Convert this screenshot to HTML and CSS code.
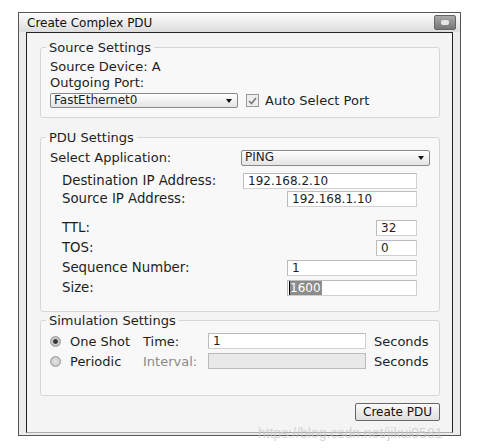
FILE: index.html
```html
<!DOCTYPE html>
<html>
<head>
    <title>Create Complex PDU</title>
    <link rel="stylesheet" href="styles.css">
</head>
<body>
    <div class="window">
        <div class="titlebar">
            <span class="title">Create Complex PDU</span>
            <span class="closebtn"><span class="face"></span></span>
        </div>

        <div class="content">
            <!-- Source -->
            <fieldset class="group src">
                <legend>Source Settings</legend>
                <div class="line">Source Device: A</div>
                <div class="line">Outgoing Port:</div>
                <div class="portrow">
                    <div class="select portsel"><span>FastEthernet0</span><span class="arrow"></span></div>
                    <span class="check">
                        <svg width="9" height="8" viewBox="0 0 9 8"><path d="M1 4 L3.5 6.5 L8 1" fill="none" stroke="#777" stroke-width="1.6"/></svg>
                    </span>
                    <span>Auto Select Port</span>
                </div>
            </fieldset>

            <!-- PDU -->
            <fieldset class="group pdu">
                <legend>PDU Settings</legend>
                <div class="approw">
                    <span>Select Application:</span>
                    <div class="select appsel"><span>PING</span><span class="arrow"></span></div>
                </div>
                <div class="fields">
                    <div class="frow dst"><span>Destination IP Address:</span><span class="input w174">192.168.2.10</span></div>
                    <div class="frow srcip"><span>Source IP Address:</span><span class="input w130">192.168.1.10</span></div>
                    <div class="frow ttl"><span>TTL:</span><span class="input w41">32</span></div>
                    <div class="frow"><span>TOS:</span><span class="input w41">0</span></div>
                    <div class="frow"><span>Sequence Number:</span><span class="input w130">1</span></div>
                    <div class="frow"><span>Size:</span><span class="input w130"><span class="sel">1600</span></span></div>
                </div>
            </fieldset>

            <!-- Simulation -->
            <fieldset class="group sim">
                <legend>Simulation Settings</legend>
                <div class="simgrid">
                    <span class="radio on"></span>
                    <span>One Shot</span>
                    <span>Time:</span>
                    <span class="input">1</span>
                    <span>Seconds</span>

                    <span class="radio"></span>
                    <span>Periodic</span>
                    <span class="dim">Interval:</span>
                    <span class="input off"></span>
                    <span>Seconds</span>
                </div>
            </fieldset>

            <div class="actions">
                <button class="createbtn">Create PDU</button>
            </div>
        </div>
    </div>
    <div class="mark">https://blog.csdn.net/jikui0581</div>
</body>
</html>
```

FILE: styles.css
```css
body {
    margin: 0;
    background: #fff;
    font-family: "DejaVu Sans", Verdana, sans-serif;
    font-size: 13px;
    color: #1e1e1e;
}
.window {
    margin: 12px 0 0 18px;
    width: 441px;
    height: 422px;
    border: 1px solid #555;
    background: #ececec;
    display: flex;
    flex-direction: column;
}
.titlebar {
    height: 19px;
    display: flex;
    align-items: center;
    justify-content: space-between;
    padding: 0 4px 0 8px;
    background: linear-gradient(#fdfdfd, #dcdcdc);
    font-size: 12px;
    color: #111;
}
.closebtn {
    width: 20px;
    height: 13px;
    border: 1px solid #666;
    border-radius: 2px;
    background: linear-gradient(#aaa, #777);
    display: flex;
    align-items: center;
    justify-content: center;
}
.closebtn .face {
    width: 8px;
    height: 5px;
    border-radius: 2px;
    background: #e6e6e6;
}
.content {
    flex: 1;
    margin: 0 7px 2px 7px;
    border: 1px solid #222;
    border-bottom-color: #aaa;
    background: #f4f4f4;
    padding: 7px 12px 0 13px;
}
.group {
    margin: 0;
    border: 1px solid #d6d6d6;
    border-radius: 3px;
    background: #f8f8f8;
    padding: 4px 9px 0 8px;
}
.group legend {
    margin-left: -3px;
    padding: 0 3px;
    line-height: 15px;
}
.line {
    line-height: 16px;
    padding-left: 1px;
}
.src { padding-bottom: 8px; }
.portrow {
    display: flex;
    align-items: center;
    height: 17px;
    margin-top: 1px;
    padding-left: 1px;
}
.select {
    height: 13px;
    border: 1px solid #8a8a8a;
    border-radius: 2px;
    background: linear-gradient(#fff, #e4e4e4);
    display: flex;
    align-items: center;
    justify-content: space-between;
    padding: 0 5px 0 3px;
    font-size: 12px;
    line-height: 13px;
}
.arrow {
    width: 0;
    height: 0;
    border-left: 3px solid transparent;
    border-right: 3px solid transparent;
    border-top: 4px solid #111;
}
.portsel { width: 178px; }
.check {
    width: 11px;
    height: 11px;
    border: 1px solid #999;
    background: #eee;
    margin: 0 6px 0 8px;
    display: flex;
    align-items: center;
    justify-content: center;
}
.pdu {
    margin-top: 12px;
    padding-bottom: 16px;
}
.approw {
    display: flex;
    justify-content: space-between;
    align-items: center;
    height: 17px;
    padding-left: 1px;
}
.appsel { width: 179px; height: 14px; }
.fields {
    display: flex;
    flex-direction: column;
    gap: 5px;
    margin-top: 7px;
    padding: 0 13px 0 13px;
    font-size: 13.3px;
}
.frow {
    display: flex;
    justify-content: space-between;
    align-items: center;
    height: 15px;
}
.frow.srcip { margin-top: -2px; }
.frow.ttl { margin-top: 9px; }
.input {
    border: 1px solid #d0d0d0;
    border-top-color: #bbb;
    border-left-color: #bbb;
    background: #fff;
    padding-left: 4px;
    line-height: 14px;
    font-size: 12px;
    box-sizing: border-box;
    height: 16px;
}
.w174 { width: 174px; }
.w130 { width: 130px; }
.w41 { width: 41px; }
.sel {
    background: #8c8c8c;
    color: #fff;
    border-left: 1px solid #000;
    margin-left: -3px;
    padding-right: 1px;
}
.sim {
    margin-top: 1px;
    padding-top: 5px;
    padding-bottom: 26px;
}
.simgrid {
    display: grid;
    grid-template-columns: 20px 73px 65px 158px auto;
    grid-auto-rows: 16px;
    row-gap: 4px;
    align-items: center;
    padding-left: 1px;
}
.simgrid > span:nth-child(5n) { padding-left: 8px; }
.radio {
    width: 9px;
    height: 9px;
    border: 1px solid #999;
    border-radius: 50%;
    background: radial-gradient(#e8e8e8, #bdbdbd);
}
.radio.on {
    background: radial-gradient(#333 30%, #ccc 45%, #aaa);
}
.dim { color: #8a8a8a; }
.input.off {
    background: #e9e9e9;
    border-color: #bbb;
}
.actions {
    display: flex;
    justify-content: flex-end;
    margin-top: 7px;
}
.createbtn {
    height: 18px;
    width: 85px;
    padding: 0;
    border: 1px solid #666;
    border-radius: 2px;
    background: linear-gradient(#fafafa, #dedede);
    font-family: "DejaVu Sans", Verdana, sans-serif;
    font-size: 12px;
    color: #111;
}
.mark {
    position: absolute;
    left: 258px;
    top: 425px;
    white-space: nowrap;
    font-size: 14px;
    color: rgba(200, 200, 200, 0.75);
    font-family: "Liberation Sans", Arial, sans-serif;
}
```
